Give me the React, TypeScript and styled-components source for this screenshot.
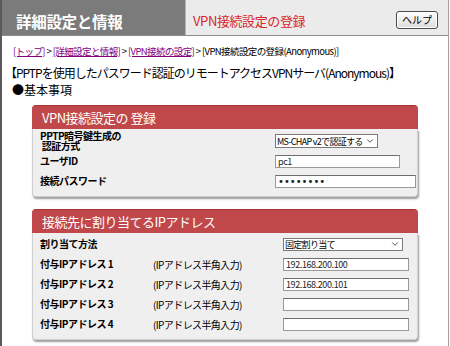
import React from 'react';
import styled, { createGlobalStyle } from 'styled-components';
import { ChevronDown } from 'lucide-react';

const GlobalStyle = createGlobalStyle`
    body {
        margin: 0;
        background: #fff;
        font-family: "Noto Sans CJK JP", "DejaVu Sans", sans-serif;
        color: #000;
    }
`

const Page = styled.div`
    width: 446px;
    height: 346px;
    overflow: hidden;
    border-left: 2px solid #5a5a5a;
    border-right: 1px solid #a0a0a0;
`
const Header = styled.header`
    display: flex;
    height: 35px;
    border-bottom: 1px solid #8c8c8c;
`
const Brand = styled.div`
    width: 169px;
    padding: 12px 0 0 14px;
    background: #7b7b7b;
    color: #fff;
    font-size: 15.5px;
    font-weight: bold;
    line-height: 18px;
    letter-spacing: -0.3px;
    border-right: 1px solid #b5b5b5;
`
const TitleBar = styled.div`
    flex: 1;
    display: flex;
    align-items: center;
    justify-content: space-between;
    padding: 5px 10px 0 7px;
    background: #ebebeb;
`
const PageTitle = styled.span`
    color: #d8262b;
    font-size: 13px;
    letter-spacing: -0.4px;
`
const HelpButton = styled.button`
    width: 42px;
    height: 18px;
    padding: 0;
    border: 1px solid #4d4d4d;
    border-radius: 3px;
    background: linear-gradient(#ffffff, #dcdcdc);
    box-shadow: inset 0 0 0 1px #fff;
    font-family: inherit;
    font-size: 10px;
    line-height: 14px;
    color: #000;
`
const Breadcrumb = styled.nav`
    padding: 8px 0 0 11px;
    font-size: 9.5px;
    line-height: 14px;
    letter-spacing: -0.6px;
`
const Crumb = styled.a`
    color: #800080;
    text-decoration: underline;
`
const Heading = styled.div`
    padding: 7px 0 0 3px;
    font-size: 12px;
    line-height: 15px;
    letter-spacing: -1px;
    white-space: nowrap;
`
const SubHeading = styled.div`
    padding-left: 10px;
    font-size: 12px;
    line-height: 14px;
    margin-top: 3px;
`
const Panel = styled.section<{ $top: number }>`
    width: 386px;
    margin: ${p => p.$top}px 0 0 30px;
`
const PanelHead = styled.h2`
    margin: 0;
    height: 24px;
    padding-left: 10px;
    background: #c0474a;
    border-top: 1px solid #a83437;
    border-radius: 4px 4px 0 0;
    color: #fff;
    font-size: 13px;
    font-weight: normal;
    line-height: 23px;
    letter-spacing: -0.5px;
    box-sizing: border-box;
`
const PanelBody = styled.div<{ $pt: number; $pb: number }>`
    padding: ${p => p.$pt}px 0 ${p => p.$pb}px 7px;
    background: #efefef;
    border: 1px solid #cfcfcf;
    border-top: none;
    border-radius: 0 0 4px 4px;
    box-shadow: 1px 2px 2px #9c9c9c;
`
const Row = styled.div<{ $cols: string }>`
    display: grid;
    grid-template-columns: ${p => p.$cols};
    align-items: center;
    height: 20px;
`
const Label = styled.div`
    font-size: 10px;
    font-weight: bold;
    line-height: 10px;
    letter-spacing: -0.5px;
    white-space: pre;
`
const Hint = styled.div`
    font-size: 10px;
    letter-spacing: -0.6px;
`
const TextBox = styled.input<{ $w: number; $dots?: boolean }>`
    width: ${p => p.$w}px;
    height: 13px;
    padding: 0 2px;
    box-sizing: border-box;
    border: 1px solid #9a9a9a;
    border-top-color: #6e6e6e;
    background: #fff;
    font-family: ${p => (p.$dots ? '"DejaVu Sans", sans-serif' : 'inherit')};
    font-size: ${p => (p.$dots ? 10 : 9)}px;
    line-height: 11px;
    letter-spacing: ${p => (p.$dots ? 0 : -0.4)}px;
    color: #222;
    outline: none;
`
const SelectWrap = styled.div<{ $w: number; $h: number }>`
    position: relative;
    display: flex;
    width: ${p => p.$w}px;
    height: ${p => p.$h}px;
`
const Select = styled.select`
    width: 100%;
    height: 100%;
    padding: 0 13px 0 1px;
    margin: 0;
    box-sizing: border-box;
    appearance: none;
    border: 1px solid #7a7a7a;
    border-radius: 0;
    background: #fff;
    font-family: inherit;
    font-size: 9px;
    line-height: 11px;
    letter-spacing: -0.7px;
    color: #000;
`
const Chevron = styled(ChevronDown)`
    position: absolute;
    right: 3px;
    top: 50%;
    margin-top: -5px;
    pointer-events: none;
`

const ipRows = [
    { label: '付与IPアドレス 1', value: '192.168.200.100' },
    { label: '付与IPアドレス 2', value: '192.168.200.101' },
    { label: '付与IPアドレス 3', value: '' },
    { label: '付与IPアドレス 4', value: '' },
]

const App = () => {
    return (
        <Page>
            <GlobalStyle />
            <Header>
                <Brand>詳細設定と情報</Brand>
                <TitleBar>
                    <PageTitle>VPN接続設定の登録</PageTitle>
                    <HelpButton>ヘルプ</HelpButton>
                </TitleBar>
            </Header>

            <Breadcrumb>
                <Crumb>[トップ]</Crumb> &gt; <Crumb>[詳細設定と情報]</Crumb> &gt;{' '}
                <Crumb>[VPN接続の設定]</Crumb> &gt; [VPN接続設定の登録(Anonymous)]
            </Breadcrumb>

            <Heading>【PPTPを使用したパスワード認証のリモートアクセスVPNサーバ(Anonymous)】</Heading>
            <SubHeading>●基本事項</SubHeading>

            <Panel $top={8}>
                <PanelHead>VPN接続設定の 登録</PanelHead>
                <PanelBody $pt={2} $pb={5}>
                    <Row $cols="235px 1fr">
                        <Label>{'PPTP暗号鍵生成の\n 認証方式'}</Label>
                        <SelectWrap $w={103} $h={14}>
                            <Select defaultValue="mschap">
                                <option value="mschap">MS-CHAP v2で認証する</option>
                            </Select>
                            <Chevron size={10} strokeWidth={1.6} />
                        </SelectWrap>
                    </Row>
                    <Row $cols="235px 1fr">
                        <Label>ユーザID</Label>
                        <TextBox $w={125} defaultValue="pc1" />
                    </Row>
                    <Row $cols="235px 1fr">
                        <Label>接続パスワード</Label>
                        <TextBox $w={141} $dots type="password" defaultValue="pppppppp" />
                    </Row>
                </PanelBody>
            </Panel>

            <Panel $top={12}>
                <PanelHead>接続先に割り当てるIPアドレス</PanelHead>
                <PanelBody $pt={1} $pb={5}>
                    <Row $cols="243px 1fr">
                        <Label>割り当て方法</Label>
                        <SelectWrap $w={120} $h={13}>
                            <Select defaultValue="fixed">
                                <option value="fixed">固定割り当て</option>
                            </Select>
                            <Chevron size={10} strokeWidth={1.6} />
                        </SelectWrap>
                    </Row>
                    {ipRows.map(r => (
                        <Row key={r.label} $cols="113px 130px 1fr">
                            <Label>{r.label}</Label>
                            <Hint>(IPアドレス半角入力)</Hint>
                            <TextBox $w={126} defaultValue={r.value} />
                        </Row>
                    ))}
                </PanelBody>
            </Panel>
        </Page>
    );
};

export default App;
